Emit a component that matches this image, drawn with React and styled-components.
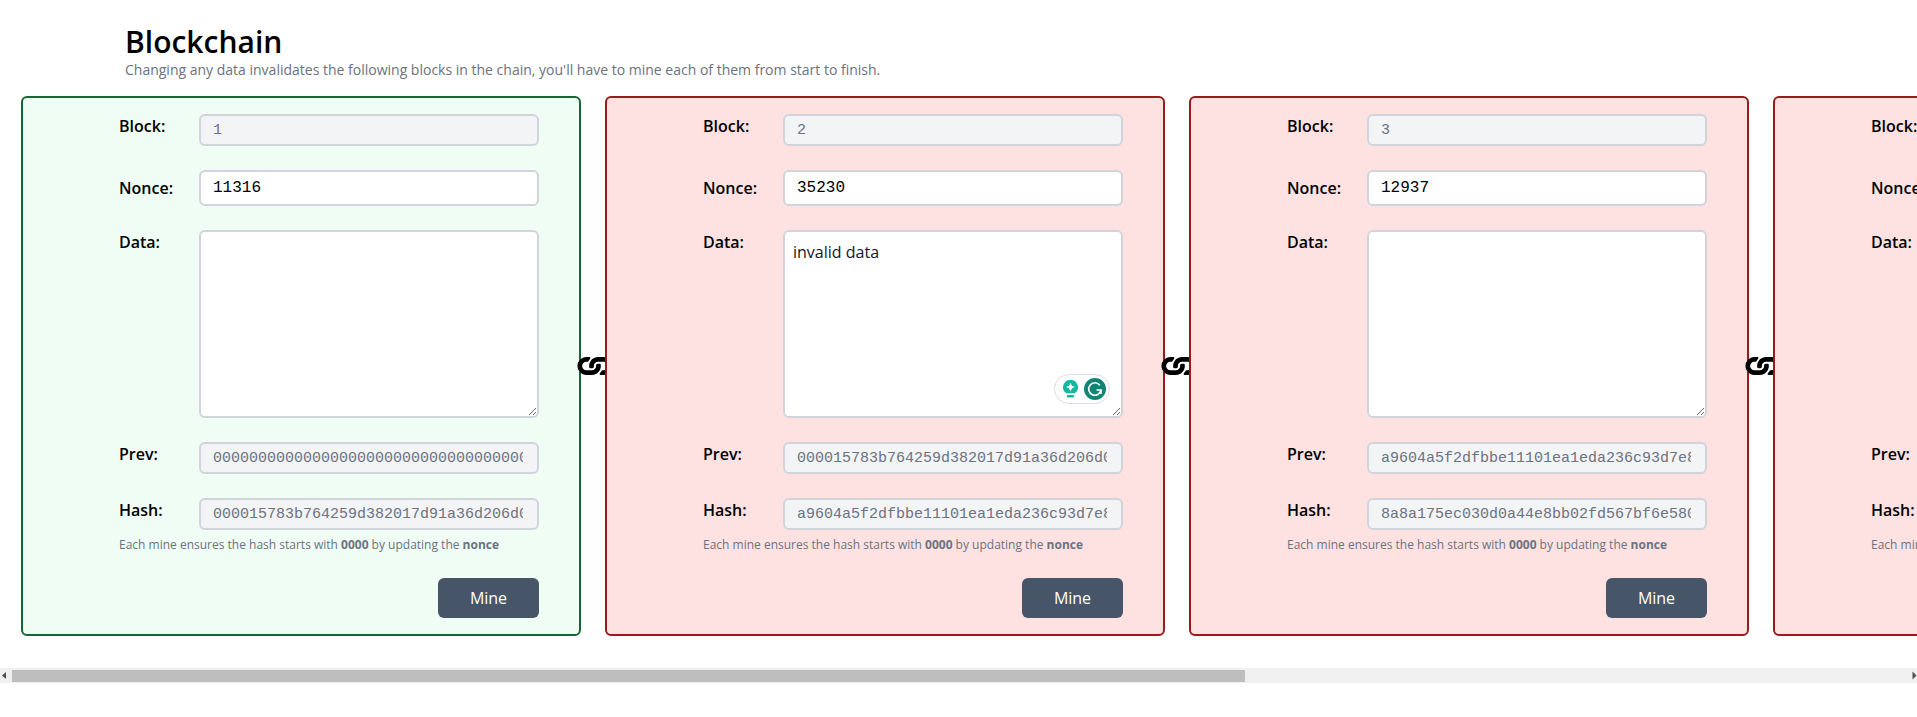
import React from 'react';
import styled, { createGlobalStyle } from 'styled-components';
import { FaLink } from 'react-icons/fa';

const BLOCKS = [
  {
    id: 1,
    nonce: '11316',
    data: '',
    prev: '0000000000000000000000000000000000000000000000000000000000000000',
    hash: '000015783b764259d382017d91a36d206d0a4e3c6ab5f1c7e2d40b98f3a1c6e7',
    valid: true,
  },
  {
    id: 2,
    nonce: '35230',
    data: 'invalid data',
    prev: '000015783b764259d382017d91a36d206d0a4e3c6ab5f1c7e2d40b98f3a1c6e7',
    hash: 'a9604a5f2dfbbe11101ea1eda236c93d7e8b04f1c27d96e3a58f0c4be7d1392a',
    grammarly: true,
  },
  {
    id: 3,
    nonce: '12937',
    data: '',
    prev: 'a9604a5f2dfbbe11101ea1eda236c93d7e8b04f1c27d96e3a58f0c4be7d1392a',
    hash: '8a8a175ec030d0a44e8bb02fd567bf6e580c3d19a7f24be06d15c8e3f9a2b74d',
  },
  {
    id: 4,
    nonce: '4721',
    data: '',
    prev: '8a8a175ec030d0a44e8bb02fd567bf6e580c3d19a7f24be06d15c8e3f9a2b74d',
    hash: '5c1e07d9ab34f86e21d07c5ba9e38f4162cd07ba95e1f3a8406bd27ce9f1038b',
    last: true,
  },
];

const GlobalStyle = createGlobalStyle`
  * {
    box-sizing: border-box;
  }

  html,
  body {
    margin: 0;
    background: #fff;
    overflow: hidden;
  }

  body {
    font-family: 'Open Sans', sans-serif;
  }
`;

const Page = styled.div`
  width: 1917px;
  height: 717px;
`;

const Viewport = styled.main`
  height: 668px;
  overflow: hidden;
`;

const Header = styled.header`
  height: 96px;
  padding: 24px 0 0 125px;
`;

const Title = styled.h1`
  margin: 0;
  font-size: 30px;
  line-height: 36px;
  font-weight: 600;
  color: #000;
`;

const Subtitle = styled.p`
  margin: 0;
  font-size: 14px;
  line-height: 20px;
  color: #6b7280;
`;

const Chain = styled.div`
  display: flex;
  gap: 24px;
  padding-left: 21px;
`;

const Card = styled.section`
  position: relative;
  flex: none;
  width: 560px;
  height: 540px;
  padding: 16px 40px 16px 96px;
  border: 2px solid ${p => (p.$valid ? '#166534' : '#991b1b')};
  border-radius: 6px;
  background: ${p => (p.$valid ? '#f0fdf4' : '#fee2e2')};
`;

const Link = styled(FaLink)`
  position: absolute;
  top: 253px;
  right: -31px;
  width: 30px;
  height: 30px;
  color: #000;
  transform: rotate(45deg);
`;

const Row = styled.div`
  display: grid;
  grid-template-columns: 80px 340px;
  margin-bottom: ${p => p.$gap}px;
`;

const Label = styled.label`
  padding-top: ${p => p.$top || 0}px;
  font-size: 16px;
  line-height: 24px;
  font-weight: 600;
  color: #000;
`;

const Field = styled.input`
  display: block;
  width: 100%;
  height: ${p => (p.$disabled ? 32 : 36)}px;
  padding: 0 14px 0 12px;
  border: 2px solid #d1d5db;
  border-radius: 6px;
  outline: none;
  background: ${p => (p.$disabled ? '#f3f4f6' : '#fff')};
  color: ${p => (p.$disabled ? '#6b7280' : '#000')};
  font-family: 'Liberation Mono', monospace;
  font-size: ${p => (p.$disabled ? 15 : 16)}px;
  -webkit-text-fill-color: currentColor;
  opacity: 1;
`;

const AreaWrap = styled.div`
  position: relative;
  height: 188px;
`;

const Area = styled.textarea`
  display: block;
  width: 100%;
  height: 100%;
  padding: 8px;
  border: 2px solid #d1d5db;
  border-radius: 6px;
  outline: none;
  background: #fff;
  color: #111827;
  font-family: 'Open Sans', sans-serif;
  font-size: 16px;
  line-height: 24px;
  resize: vertical;
`;

const Widget = styled.div`
  position: absolute;
  right: 13px;
  bottom: 14px;
  display: flex;
  align-items: center;
  gap: 6px;
  width: 56px;
  height: 30px;
  padding: 0 3px 0 8px;
  border: 1px solid #dcdee6;
  border-radius: 15px;
  background: #fff;
`;

const Help = styled.p`
  margin: -1px 0 0;
  font-size: 12px;
  line-height: 16px;
  color: #6b7280;

  strong {
    font-weight: 700;
  }
`;

const Actions = styled.div`
  display: flex;
  justify-content: flex-end;
  width: 420px;
  margin-top: 25px;
`;

const MineButton = styled.button`
  width: 101px;
  height: 40px;
  border: none;
  border-radius: 6px;
  background: #475569;
  color: #fff;
  font-family: 'Open Sans', sans-serif;
  font-size: 16px;
`;

const Scrollbar = styled.div`
  display: flex;
  align-items: center;
  justify-content: space-between;
  height: 15px;
  background: #f0f0f0;
`;

const ThumbRow = styled.div`
  display: flex;
  align-items: center;
  gap: 2px;
`;

const Thumb = styled.div`
  width: 1233px;
  height: 12px;
  background: #bebebe;
`;

const ArrowButton = styled.svg`
  display: block;
  flex: none;
  fill: #505050;
`;

const GrammarlyIcons = () => (
  <>
    <svg width="15" height="18" viewBox="0 0 15 18">
      <path d="M7.500 0a7.300 7.300 0 0 1 4.300 13.300H3.200A7.300 7.300 0 0 1 7.500 0z" fill="#13b79d" />
      <path d="M7.500 2.800l1.300 3 3 1.300-3 1.300-1.300 3-1.300-3-3-1.300 3-1.300z" fill="#fff" />
      <rect x="3.800" y="15" width="7.400" height="2.600" rx="1" fill="#13b79d" />
    </svg>
    <svg width="22" height="22" viewBox="0 0 22 22">
      <circle cx="11" cy="11" r="11" fill="#0f8574" />
      <path d="M15.800 7.200A6.200 6.200 0 1 0 17 12h-4.500" fill="none" stroke="#fff" strokeWidth="1.600" />
      <path d="M17 12v4" stroke="#fff" strokeWidth="1.600" />
    </svg>
  </>
);

const Block = ({ block }) => (
  <Card $valid={block.valid}>
    <Row $gap={24}>
      <Label>Block:</Label>
      <Field $disabled disabled value={block.id} readOnly />
    </Row>
    <Row $gap={24}>
      <Label $top={6}>Nonce:</Label>
      <Field value={block.nonce} readOnly />
    </Row>
    <Row $gap={24}>
      <Label>Data:</Label>
      <AreaWrap>
        <Area value={block.data} readOnly spellCheck={false} />
        {block.grammarly && (
          <Widget>
            <GrammarlyIcons />
          </Widget>
        )}
      </AreaWrap>
    </Row>
    <Row $gap={24}>
      <Label>Prev:</Label>
      <Field $disabled disabled value={block.prev} readOnly />
    </Row>
    <Row $gap={8}>
      <Label>Hash:</Label>
      <Field $disabled disabled value={block.hash} readOnly />
    </Row>
    <Help>
      Each mine ensures the hash starts with <strong>0000</strong> by updating the{' '}
      <strong>nonce</strong>
    </Help>
    <Actions>
      <MineButton>Mine</MineButton>
    </Actions>
    {!block.last && <Link />}
  </Card>
);

export default function App() {
  return (
    <Page>
      <GlobalStyle />
      <Viewport>
        <Header>
          <Title>Blockchain</Title>
          <Subtitle>
            Changing any data invalidates the following blocks in the chain, you'll have to mine
            each of them from start to finish.
          </Subtitle>
        </Header>
        <Chain>
          {BLOCKS.map(block => (
            <Block key={block.id} block={block} />
          ))}
        </Chain>
      </Viewport>
      <Scrollbar>
        <ThumbRow>
          <ArrowButton width="10" height="15" viewBox="0 0 10 15">
            <polygon points="2,7.500 6,4 6,11" />
          </ArrowButton>
          <Thumb />
        </ThumbRow>
        <ArrowButton width="12" height="15" viewBox="0 0 12 15">
          <polygon points="7.500,3.500 7.500,11.500 11.500,7.500" />
        </ArrowButton>
      </Scrollbar>
    </Page>
  );
}
